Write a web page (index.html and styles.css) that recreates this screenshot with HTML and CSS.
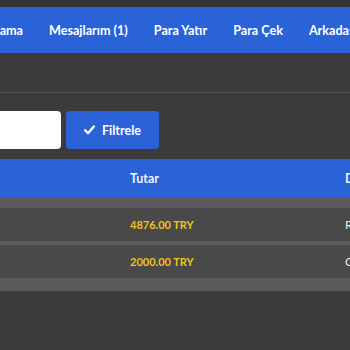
FILE: index.html
```html
<!DOCTYPE html>
<html lang="tr">
<head>
<meta charset="utf-8">
<link rel="stylesheet" href="styles.css">
</head>
<body>
<div class="topstrip"></div>
<nav class="nav">
  <ul class="nav-list">
    <li class="nav-item">Sorgulama</li>
    <li class="nav-item">Mesajlarım (1)</li>
    <li class="nav-item">Para Yatır</li>
    <li class="nav-item">Para Çek</li>
    <li class="nav-item">Arkadaşını Davet Et</li>
  </ul>
</nav>
<div class="divider"></div>
<div class="filter">
  <input class="filter-input" type="text">
  <button class="filter-btn">
    <svg class="check" width="11" height="10" viewBox="0 0 11 10"><path d="M1.2 5.2 L4 8.2 L9.8 1.4" fill="none" stroke="#fff" stroke-width="2.3" stroke-linecap="round" stroke-linejoin="round"/></svg>
    <span>Filtrele</span>
  </button>
</div>
<div class="table">
  <div class="thead">
    <div class="cell"></div>
    <div class="cell">Tutar</div>
    <div class="cell">Durum</div>
  </div>
  <div class="tbody">
    <div class="row">
      <div class="cell"></div>
      <div class="cell amount">4876.00 TRY</div>
      <div class="cell">Reddedildi</div>
    </div>
    <div class="row">
      <div class="cell"></div>
      <div class="cell amount">2000.00 TRY</div>
      <div class="cell">Onaylandı</div>
    </div>
  </div>
</div>
</body>
</html>
```
FILE: styles.css
```css
html, body {
  margin: 0;
  padding: 0;
}
body {
  background: #3b3b3b;
  font-family: Lato, "Open Sans", sans-serif;
  font-weight: 700;
  font-size: 12px;
  color: #fff;
  width: 350px;
  height: 350px;
  overflow: hidden;
}
.topstrip {
  height: 7px;
  background: #333333;
}
.nav {
  height: 46px;
  background: #2a62d8;
  overflow: hidden;
  font-size: 12.6px;
}
.nav-list {
  list-style: none;
  margin: 0 0 0 -49px;
  padding: 0;
  display: flex;
  height: 100%;
  align-items: center;
  white-space: nowrap;
}
.nav-item {
  padding: 0 13px;
  flex: none;
}
.divider {
  height: 1px;
  background: #505050;
  margin-top: 39px;
}
.filter {
  display: flex;
  gap: 5px;
  margin-top: 18px;
  height: 38px;
}
.filter-input {
  width: 61px;
  height: 38px;
  box-sizing: border-box;
  border: none;
  border-radius: 0 4px 4px 0;
  background: #fff;
  margin: 0;
  padding: 0;
}
.filter-btn {
  width: 93px;
  height: 38px;
  border: none;
  border-radius: 4px;
  background: #2b62d8;
  color: #fff;
  font: inherit;
  font-size: 12.6px;
  display: flex;
  align-items: center;
  justify-content: center;
  gap: 7px;
  padding: 0;
}
.check {
  display: block;
}
.table {
  margin-top: 10px;
}
.thead {
  height: 39px;
  background: #2a62d8;
  display: grid;
  grid-template-columns: 130px 215px 1fr;
  align-items: center;
  color: #eef3ff;
  font-size: 12.4px;
}
.tbody {
  background: #5b5b5b;
  padding: 10px 0 13px;
  display: flex;
  flex-direction: column;
  gap: 4px;
}
.row {
  height: 33px;
  background: #494949;
  display: grid;
  grid-template-columns: 130px 215px 1fr;
  align-items: center;
  font-weight: 400;
  color: #e8e8e8;
}
.cell {
  white-space: nowrap;
  overflow: hidden;
}
.amount {
  color: #f1c21b;
  font-weight: 700;
  font-size: 11px;
}
```
